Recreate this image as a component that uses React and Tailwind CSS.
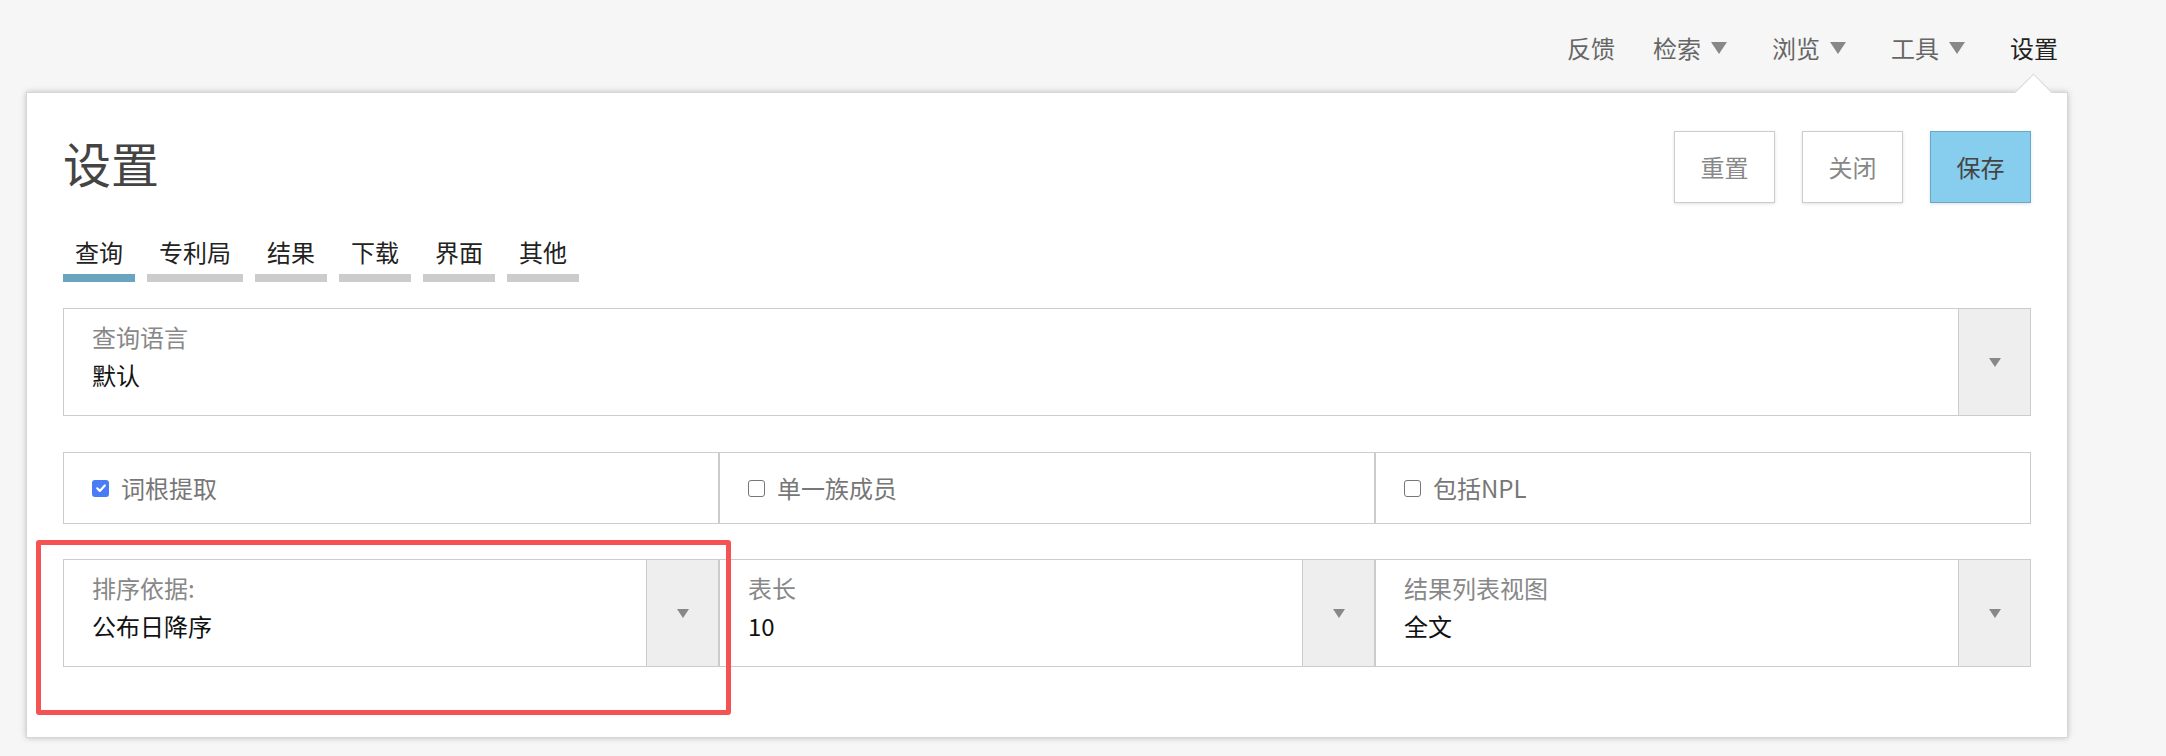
import React from 'react';

const font = { fontFamily: '"Noto Sans CJK SC", "Noto Sans", sans-serif' };

function Caret({ className = '' }) {
  return (
    <svg viewBox="0 0 12 9" className={className}>
      <path d="M0 0h12L6 9z" fill="#888" />
    </svg>
  );
}

function NavItem({ label, menu, active }) {
  return (
    <div className="flex items-center">
      <span className={active ? 'text-[#222]' : 'text-[#666]'}>{label}</span>
      {menu && <Caret className="ml-[10px] mr-[7px] w-[16px] h-[12px]" />}
    </div>
  );
}

function Tab({ label, active }) {
  return (
    <div className="flex flex-col items-stretch">
      <span className="px-[12px] text-center leading-[32px] text-[#222]">{label}</span>
      <div className={'mt-[6px] h-[8px] ' + (active ? 'bg-[#6aa5bf]' : 'bg-[#cccccc]')} />
    </div>
  );
}

function Select({ label, value }) {
  return (
    <div className="flex h-[108px] border border-[#cccccc] bg-white">
      <div className="flex-1 pl-[28px] pt-[12px]">
        <div className="leading-[32px] text-[#888]">{label}</div>
        <div className="mt-[6px] leading-[32px] text-[#111]">{value}</div>
      </div>
      <div className="flex w-[72px] items-center justify-center border-l border-[#cccccc] bg-[#eeeeee]">
        <Caret className="w-[12px] h-[9px]" />
      </div>
    </div>
  );
}

function Check({ label, checked }) {
  return (
    <div className="flex h-[72px] items-center border border-[#cccccc] pl-[28px]">
      {checked ? (
        <span className="flex h-[17px] w-[17px] items-center justify-center rounded-[3px] bg-[#4a7cf6]">
          <svg viewBox="0 0 12 12" className="h-[12px] w-[12px]">
            <path d="M2.2 6.3l2.6 2.6 5-5.4" fill="none" stroke="#fff" strokeWidth="2.2" strokeLinecap="round" strokeLinejoin="round" />
          </svg>
        </span>
      ) : (
        <span className="h-[17px] w-[17px] rounded-[3px] border-[1.5px] border-[#777]" />
      )}
      <span className="ml-[12px] text-[#777]">{label}</span>
    </div>
  );
}

function Button({ children, primary }) {
  return (
    <button
      className={
        'h-[72px] w-[101px] border shadow-[0_1px_3px_rgba(0,0,0,0.12)] ' +
        (primary ? 'border-[#6aa8c5] bg-[#86cdee] text-[#444]' : 'border-[#cccccc] bg-white text-[#888]')
      }
    >
      {children}
    </button>
  );
}

export default function App() {
  return (
    <div className="min-h-[756px] bg-[#f6f6f6] text-[24px]" style={font}>
      <nav className="flex h-[92px] items-center justify-end gap-[38px] pr-[108px] pt-[4px]">
        <NavItem label="反馈" />
        <NavItem label="检索" menu />
        <NavItem label="浏览" menu />
        <NavItem label="工具" menu />
        <NavItem label="设置" active />
      </nav>

      <div className="relative ml-[26px] w-[2042px] border border-[#d6d6d6] bg-white px-[36px] pb-[70px] pt-[38px] shadow-[0_0_6px_rgba(0,0,0,0.22)]">
        {/* notch under the active menu item */}
        <div className="absolute right-[20px] top-[-14px] h-[27px] w-[27px] rotate-45 border-l border-t border-[#d6d6d6] bg-white" />

        <div className="flex h-[72px] items-center justify-between">
          <h1 className="pb-[10px] text-[48px] leading-none text-[#444]">设置</h1>
          <div className="flex gap-[27px]">
            <Button>重置</Button>
            <Button>关闭</Button>
            <Button primary>保存</Button>
          </div>
        </div>

        <div className="mt-[33px] flex gap-[12px]">
          <Tab label="查询" active />
          <Tab label="专利局" />
          <Tab label="结果" />
          <Tab label="下载" />
          <Tab label="界面" />
          <Tab label="其他" />
        </div>

        <div className="mt-[26px]">
          <Select label="查询语言" value="默认" />
        </div>

        <div className="mt-[36px] grid grid-cols-3">
          <Check label="词根提取" checked />
          <Check label="单一族成员" />
          <Check label="包括NPL" />
        </div>

        <div className="mt-[35px] grid grid-cols-3">
          <Select label="排序依据:" value="公布日降序" />
          <Select label="表长" value="10" />
          <Select label="结果列表视图" value="全文" />
        </div>

        {/* highlight frame */}
        <div className="pointer-events-none absolute left-[9px] top-[447px] h-[175px] w-[695px] rounded-[3px] border-[5px] border-[#f55353]" />
      </div>
    </div>
  );
}
